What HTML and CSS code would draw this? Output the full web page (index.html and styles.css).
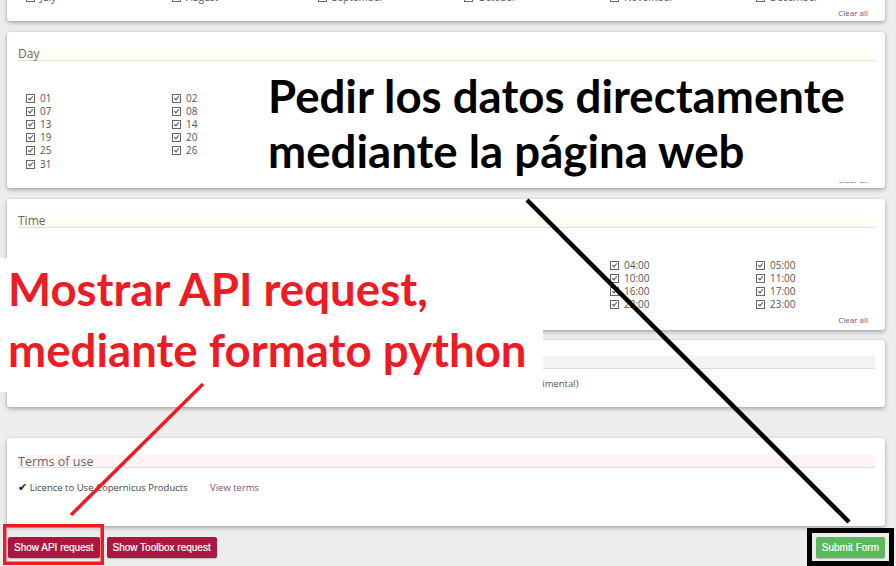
FILE: index.html
```html
<!DOCTYPE html>
<html lang="es">
<head>
<meta charset="utf-8">
<title>Form</title>
<link rel="stylesheet" href="styles.css">
</head>
<body>
<div class="page">
  <section class="card card-months">
    <div class="grid">
      <label class="item"><span class="cb"></span>July</label>
      <label class="item"><span class="cb"></span>August</label>
      <label class="item"><span class="cb"></span>September</label>
      <label class="item"><span class="cb"></span>October</label>
      <label class="item"><span class="cb"></span>November</label>
      <label class="item"><span class="cb"></span>December</label>
    </div>
    <div class="clear">Clear all</div>
  </section>

  <section class="card card-day">
    <h3 class="head head-yellow">Day</h3>
    <div class="grid">
      <label class="item"><span class="cb on"></span>01</label>
      <label class="item"><span class="cb on"></span>02</label>
      <label class="item"><span class="cb on"></span>03</label>
      <label class="item"><span class="cb on"></span>04</label>
      <label class="item"><span class="cb on"></span>05</label>
      <label class="item"><span class="cb on"></span>06</label>
      <label class="item"><span class="cb on"></span>07</label>
      <label class="item"><span class="cb on"></span>08</label>
      <label class="item"><span class="cb on"></span>09</label>
      <label class="item"><span class="cb on"></span>10</label>
      <label class="item"><span class="cb on"></span>11</label>
      <label class="item"><span class="cb on"></span>12</label>
      <label class="item"><span class="cb on"></span>13</label>
      <label class="item"><span class="cb on"></span>14</label>
      <label class="item"><span class="cb on"></span>15</label>
      <label class="item"><span class="cb on"></span>16</label>
      <label class="item"><span class="cb on"></span>17</label>
      <label class="item"><span class="cb on"></span>18</label>
      <label class="item"><span class="cb on"></span>19</label>
      <label class="item"><span class="cb on"></span>20</label>
      <label class="item"><span class="cb on"></span>21</label>
      <label class="item"><span class="cb on"></span>22</label>
      <label class="item"><span class="cb on"></span>23</label>
      <label class="item"><span class="cb on"></span>24</label>
      <label class="item"><span class="cb on"></span>25</label>
      <label class="item"><span class="cb on"></span>26</label>
      <label class="item"><span class="cb on"></span>27</label>
      <label class="item"><span class="cb on"></span>28</label>
      <label class="item"><span class="cb on"></span>29</label>
      <label class="item"><span class="cb on"></span>30</label>
      <label class="item"><span class="cb on"></span>31</label>
    </div>
    <div class="clear">Clear all</div>
  </section>

  <section class="card card-time">
    <h3 class="head head-yellow">Time</h3>
    <div class="grid">
      <label class="item"><span class="cb on"></span>00:00</label>
      <label class="item"><span class="cb on"></span>01:00</label>
      <label class="item"><span class="cb on"></span>02:00</label>
      <label class="item"><span class="cb on"></span>03:00</label>
      <label class="item"><span class="cb on"></span>04:00</label>
      <label class="item"><span class="cb on"></span>05:00</label>
      <label class="item"><span class="cb on"></span>06:00</label>
      <label class="item"><span class="cb on"></span>07:00</label>
      <label class="item"><span class="cb on"></span>08:00</label>
      <label class="item"><span class="cb on"></span>09:00</label>
      <label class="item"><span class="cb on"></span>10:00</label>
      <label class="item"><span class="cb on"></span>11:00</label>
      <label class="item"><span class="cb on"></span>12:00</label>
      <label class="item"><span class="cb on"></span>13:00</label>
      <label class="item"><span class="cb on"></span>14:00</label>
      <label class="item"><span class="cb on"></span>15:00</label>
      <label class="item"><span class="cb on"></span>16:00</label>
      <label class="item"><span class="cb on"></span>17:00</label>
      <label class="item"><span class="cb on"></span>18:00</label>
      <label class="item"><span class="cb on"></span>19:00</label>
      <label class="item"><span class="cb on"></span>20:00</label>
      <label class="item"><span class="cb on"></span>21:00</label>
      <label class="item"><span class="cb on"></span>22:00</label>
      <label class="item"><span class="cb on"></span>23:00</label>
    </div>
    <div class="clear">Clear all</div>
  </section>

  <section class="card card-format">
    <h3 class="head head-grey">Format</h3>
    <div class="grid">
      <label class="item"><span class="rb"></span>GRIB</label>
      <label class="item"></label>
      <label class="item"></label>
      <label class="item"><span class="rb"></span>NetCDF (experimental)</label>
    </div>
  </section>

  <section class="card card-terms">
    <h3 class="head head-pink">Terms of use</h3>
    <div class="terms-row">
      <span class="licence"><span class="tick">✔</span> Licence to Use Copernicus Products</span>
      <span class="view">View terms</span>
    </div>
  </section>

  <div class="actions">
    <button class="btn btn-red">Show API request</button>
    <button class="btn btn-red">Show Toolbox request</button>
    <span class="grow"></span>
    <button class="btn btn-green">Submit Form</button>
  </div>
</div>

<div class="note note-web">
  <p class="line">Pedir los datos directamente</p>
  <p class="line">mediante la página web</p>
</div>

<div class="note note-api">
  <p class="line">Mostrar API request,</p>
  <p class="line">mediante formato python</p>
</div>

<svg class="marks" width="896" height="566" viewBox="0 0 896 566">
  <line x1="527" y1="200" x2="849" y2="522" stroke="#000" stroke-width="4.5"/>
  <line x1="203" y1="384" x2="71" y2="515" stroke="#ed1c24" stroke-width="3.5"/>
  <rect x="4.75" y="525.75" width="97.5" height="37.5" fill="none" stroke="#ed1c24" stroke-width="3.5"/>
  <rect x="809.5" y="530.5" width="82" height="33" fill="none" stroke="#000" stroke-width="5"/>
</svg>
</body>
</html>
```

FILE: styles.css
```css
html, body {
  margin: 0;
  padding: 0;
}

body {
  width: 896px;
  height: 566px;
  overflow: hidden;
  background: #ededed;
  font-family: "Open Sans", "Liberation Sans", sans-serif;
  position: relative;
}

.page {
  padding: 0 11px 0 7px;
}

.card {
  background: #fff;
  border-radius: 3px;
  box-shadow: 0 2px 4px rgba(0, 0, 0, 0.28), 0 0 2px rgba(0, 0, 0, 0.12);
  padding: 16px 10px 3px 11px;
}

.card-months {
  margin-top: -30px;
  padding-top: 21px;
}

.card-day {
  margin-top: 11px;
}

.card-time {
  margin-top: 11px;
  padding-bottom: 5px;
}

.card-time .grid {
  margin-top: 31px;
}

.card-format {
  margin-top: 10px;
  padding-bottom: 16px;
}

.card-terms {
  margin-top: 31px;
  padding-top: 17px;
  padding-bottom: 33px;
}

.head {
  margin: 0;
  height: 12px;
  line-height: 12px;
  font-size: 12px;
  font-weight: 400;
  color: #666;
  border-bottom: 1px solid #dcdcdc;
}

.head-yellow { background: #fffef4; }
.head-grey { background: #f4f4f4; color: #fff; }
.head-pink {
  background: #fff4f3;
  font-size: 12.5px;
  height: 12.5px;
  line-height: 13px;
}

.grid {
  display: grid;
  grid-template-columns: repeat(5, 146px) 1fr;
  padding-left: 8px;
  grid-auto-rows: 13.2px;
}

.card-day .grid {
  margin-top: 30.4px;
}

.card-format .grid {
  margin-top: 8px;
}

.item {
  display: flex;
  align-items: center;
  gap: 5px;
  font-size: 10px;
  color: #555;
  white-space: nowrap;
  line-height: 13.2px;
}

.card-format .item {
  font-size: 9.5px;
}

.cb {
  position: relative;
  flex: none;
  width: 7px;
  height: 7px;
  border: 1px solid #666;
  background: #fff;
}

.cb.on::after {
  content: "";
  position: absolute;
  left: 2px;
  top: 0;
  width: 2px;
  height: 4px;
  border-right: 1px solid #555;
  border-bottom: 1px solid #555;
  transform: rotate(40deg);
}

.rb {
  flex: none;
  width: 7px;
  height: 7px;
  border: 1px solid #777;
  border-radius: 50%;
}

.clear {
  margin-top: 4px;
  height: 10px;
  line-height: 10px;
  font-size: 8px;
  text-align: right;
  padding-right: 7px;
  color: #7a4d74;
}

.terms-row {
  margin-top: 13px;
  display: flex;
  align-items: center;
  height: 12px;
  font-size: 9.5px;
  color: #444;
}

.licence {
  width: 192px;
}

.tick {
  color: #222;
  font-family: "DejaVu Sans", sans-serif;
  font-size: 11px;
}

.view {
  color: #7a5472;
}

.actions {
  display: flex;
  align-items: center;
  gap: 7px;
  margin-top: 11px;
  padding-left: 1px;
}

.grow { flex: 1; }

.btn {
  height: 21px;
  border: none;
  border-radius: 2px;
  font-family: "Liberation Sans", Arial, sans-serif;
  font-size: 10px;
  color: #fff;
  padding: 0 6px;
  box-shadow: 0 1px 1px rgba(0, 0, 0, 0.2);
  -webkit-text-stroke: 0.2px #fff;
}

.btn-red { background: #aa1740; }
.btn-green { background: #5cb85c; }

.note {
  position: absolute;
  background: #fff;
  font-family: Lato, "Open Sans", sans-serif;
  font-weight: 700;
}

.note .line {
  margin: 0;
  white-space: nowrap;
}

.note-web {
  left: 262px;
  top: 68px;
  width: 610px;
  height: 114px;
  color: #000;
  font-size: 45.6px;
  line-height: 55px;
  padding-left: 6px;
  box-sizing: border-box;
}

.note-api {
  left: 0;
  top: 258px;
  width: 543px;
  height: 134px;
  color: #ed1c24;
  font-size: 45.6px;
  line-height: 61px;
  padding-left: 8px;
  box-sizing: border-box;
}

.marks {
  position: absolute;
  left: 0;
  top: 0;
  pointer-events: none;
}
```
